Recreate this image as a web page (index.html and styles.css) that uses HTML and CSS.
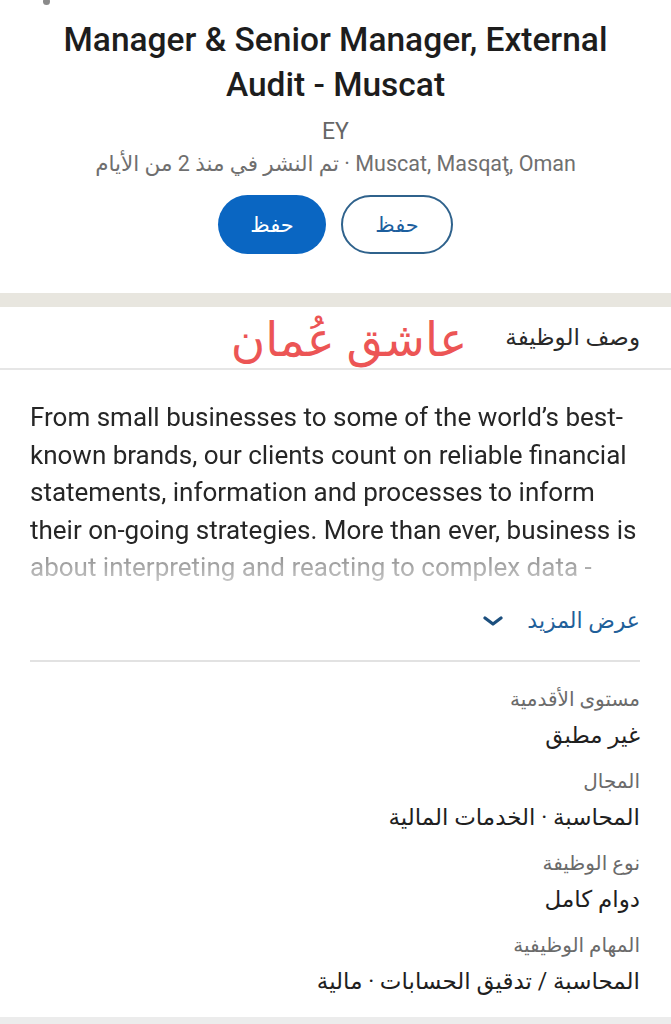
FILE: index.html
```html
<!DOCTYPE html>
<html lang="ar" dir="rtl">
<head>
    <meta charset="UTF-8">
    <meta name="viewport" content="width=device-width, initial-scale=1.0">
    <title>Manager & Senior Manager, External Audit - Muscat</title>
    <link rel="stylesheet" href="styles.css">
</head>
<body>
    <div class="top">
        <div class="dot"></div>
        <h1 class="title" dir="ltr">Manager &amp; Senior Manager, External Audit - Muscat</h1>
        <div class="company">EY</div>
        <div class="meta">Muscat, Masqaţ, Oman · تم النشر في منذ 2 من الأيام</div>
        <div class="actions">
            <button class="btn btn-outline">حفظ</button>
            <button class="btn btn-fill">حفظ</button>
        </div>
    </div>

    <div class="band"></div>

    <div class="section-head">
        <span class="section-title">وصف الوظيفة</span>
        <span class="mark">عاشق عُمان</span>
    </div>

    <div class="content">
        <p class="desc" dir="ltr">From small businesses to some of the world’s best-known brands, our clients count on reliable financial statements, information and processes to inform their on-going strategies. More than ever, business is about interpreting and reacting to complex data -</p>

        <a class="more" href="#">
            <span>عرض المزيد</span>
            <svg width="20" height="10" viewBox="0 0 20 10"><polyline points="2,2 10,8 18,2" fill="none" stroke="#1c4f7e" stroke-width="3.2" stroke-linecap="round" stroke-linejoin="round"/></svg>
        </a>

        <ul class="criteria">
            <li>
                <div class="label">مستوى الأقدمية</div>
                <div class="value">غير مطبق</div>
            </li>
            <li>
                <div class="label">المجال</div>
                <div class="value">المحاسبة · الخدمات المالية</div>
            </li>
            <li>
                <div class="label">نوع الوظيفة</div>
                <div class="value">دوام كامل</div>
            </li>
            <li>
                <div class="label">المهام الوظيفية</div>
                <div class="value">المحاسبة / تدقيق الحسابات · مالية</div>
            </li>
        </ul>
    </div>

    <div class="band band-bottom"></div>
</body>
</html>
```

FILE: styles.css
```css
body{
    margin: 0;
    padding: 0;
    background: #fff;
    font-family: Roboto, "DejaVu Sans", sans-serif;
    color: #222;
}
.top{
    padding: 0 30px 39px;
    text-align: center;
}
.dot{
    width: 7px;
    height: 7px;
    margin: -2px 0 0 auto;
    margin-right: 591px;
    border-radius: 50%;
    background: #8a8a8a;
}
.title{
    margin: 12px 0 0;
    font-size: 33.5px;
    font-weight: 500;
    line-height: 45px;
    color: #1d1d1d;
}
.company{
    margin-top: 10px;
    font-size: 23px;
    line-height: 30px;
    color: #666;
}
.meta{
    margin-top: 3px;
    font-size: 21.5px;
    line-height: 28px;
    color: #6f6f6f;
}
.actions{
    display: flex;
    justify-content: center;
    gap: 15px;
    margin-top: 17px;
}
.btn{
    height: 59px;
    border-radius: 30px;
    font-family: Roboto, "DejaVu Sans", sans-serif;
    font-size: 21px;
}
.btn-fill{
    width: 108px;
    background: #0a66c2;
    color: #fff;
    border: none;
}
.btn-outline{
    width: 112px;
    background: #fff;
    color: #1d5f9e;
    border: 2px solid #2f628c;
}
.band{
    height: 14px;
    background: #e8e6df;
}
.section-head{
    display: flex;
    align-items: center;
    gap: 38px;
    height: 61px;
    padding: 0 31px;
    border-bottom: 2px solid #e6e6e6;
}
.section-title{
    font-size: 23px;
    color: #2a2a2a;
}
.mark{
    font-size: 47px;
    line-height: 1;
    color: #ec5555;
    margin-top: 4px;
}
.content{
    padding: 0 31px 0 30px;
}
.desc{
    margin: 29px 0 0;
    font-size: 26px;
    line-height: 37.5px;
    color: #262626;
    -webkit-mask-image: linear-gradient(#000 calc(100% - 38px), rgba(0,0,0,.5) calc(100% - 30px), rgba(0,0,0,.2) 100%);
    mask-image: linear-gradient(#000 calc(100% - 38px), rgba(0,0,0,.5) calc(100% - 30px), rgba(0,0,0,.2) 100%);
}
.more{
    display: flex;
    align-items: center;
    gap: 24px;
    margin-top: 19px;
    padding-bottom: 24px;
    border-bottom: 2px solid #e2e2e2;
    font-size: 22px;
    line-height: 30px;
    color: #1f5f99;
    text-decoration: none;
}
.criteria{
    list-style: none;
    margin: 0;
    padding: 22px 0 0;
}
.criteria li{
    margin-bottom: 13px;
}
.label{
    font-size: 20px;
    line-height: 30px;
    color: #6b6b6b;
}
.value{
    margin-top: 4px;
    font-size: 23px;
    line-height: 35px;
    color: #1f1f1f;
}
.band-bottom{
    height: 8px;
    margin-top: 18px;
    background: #ececec;
}
```
